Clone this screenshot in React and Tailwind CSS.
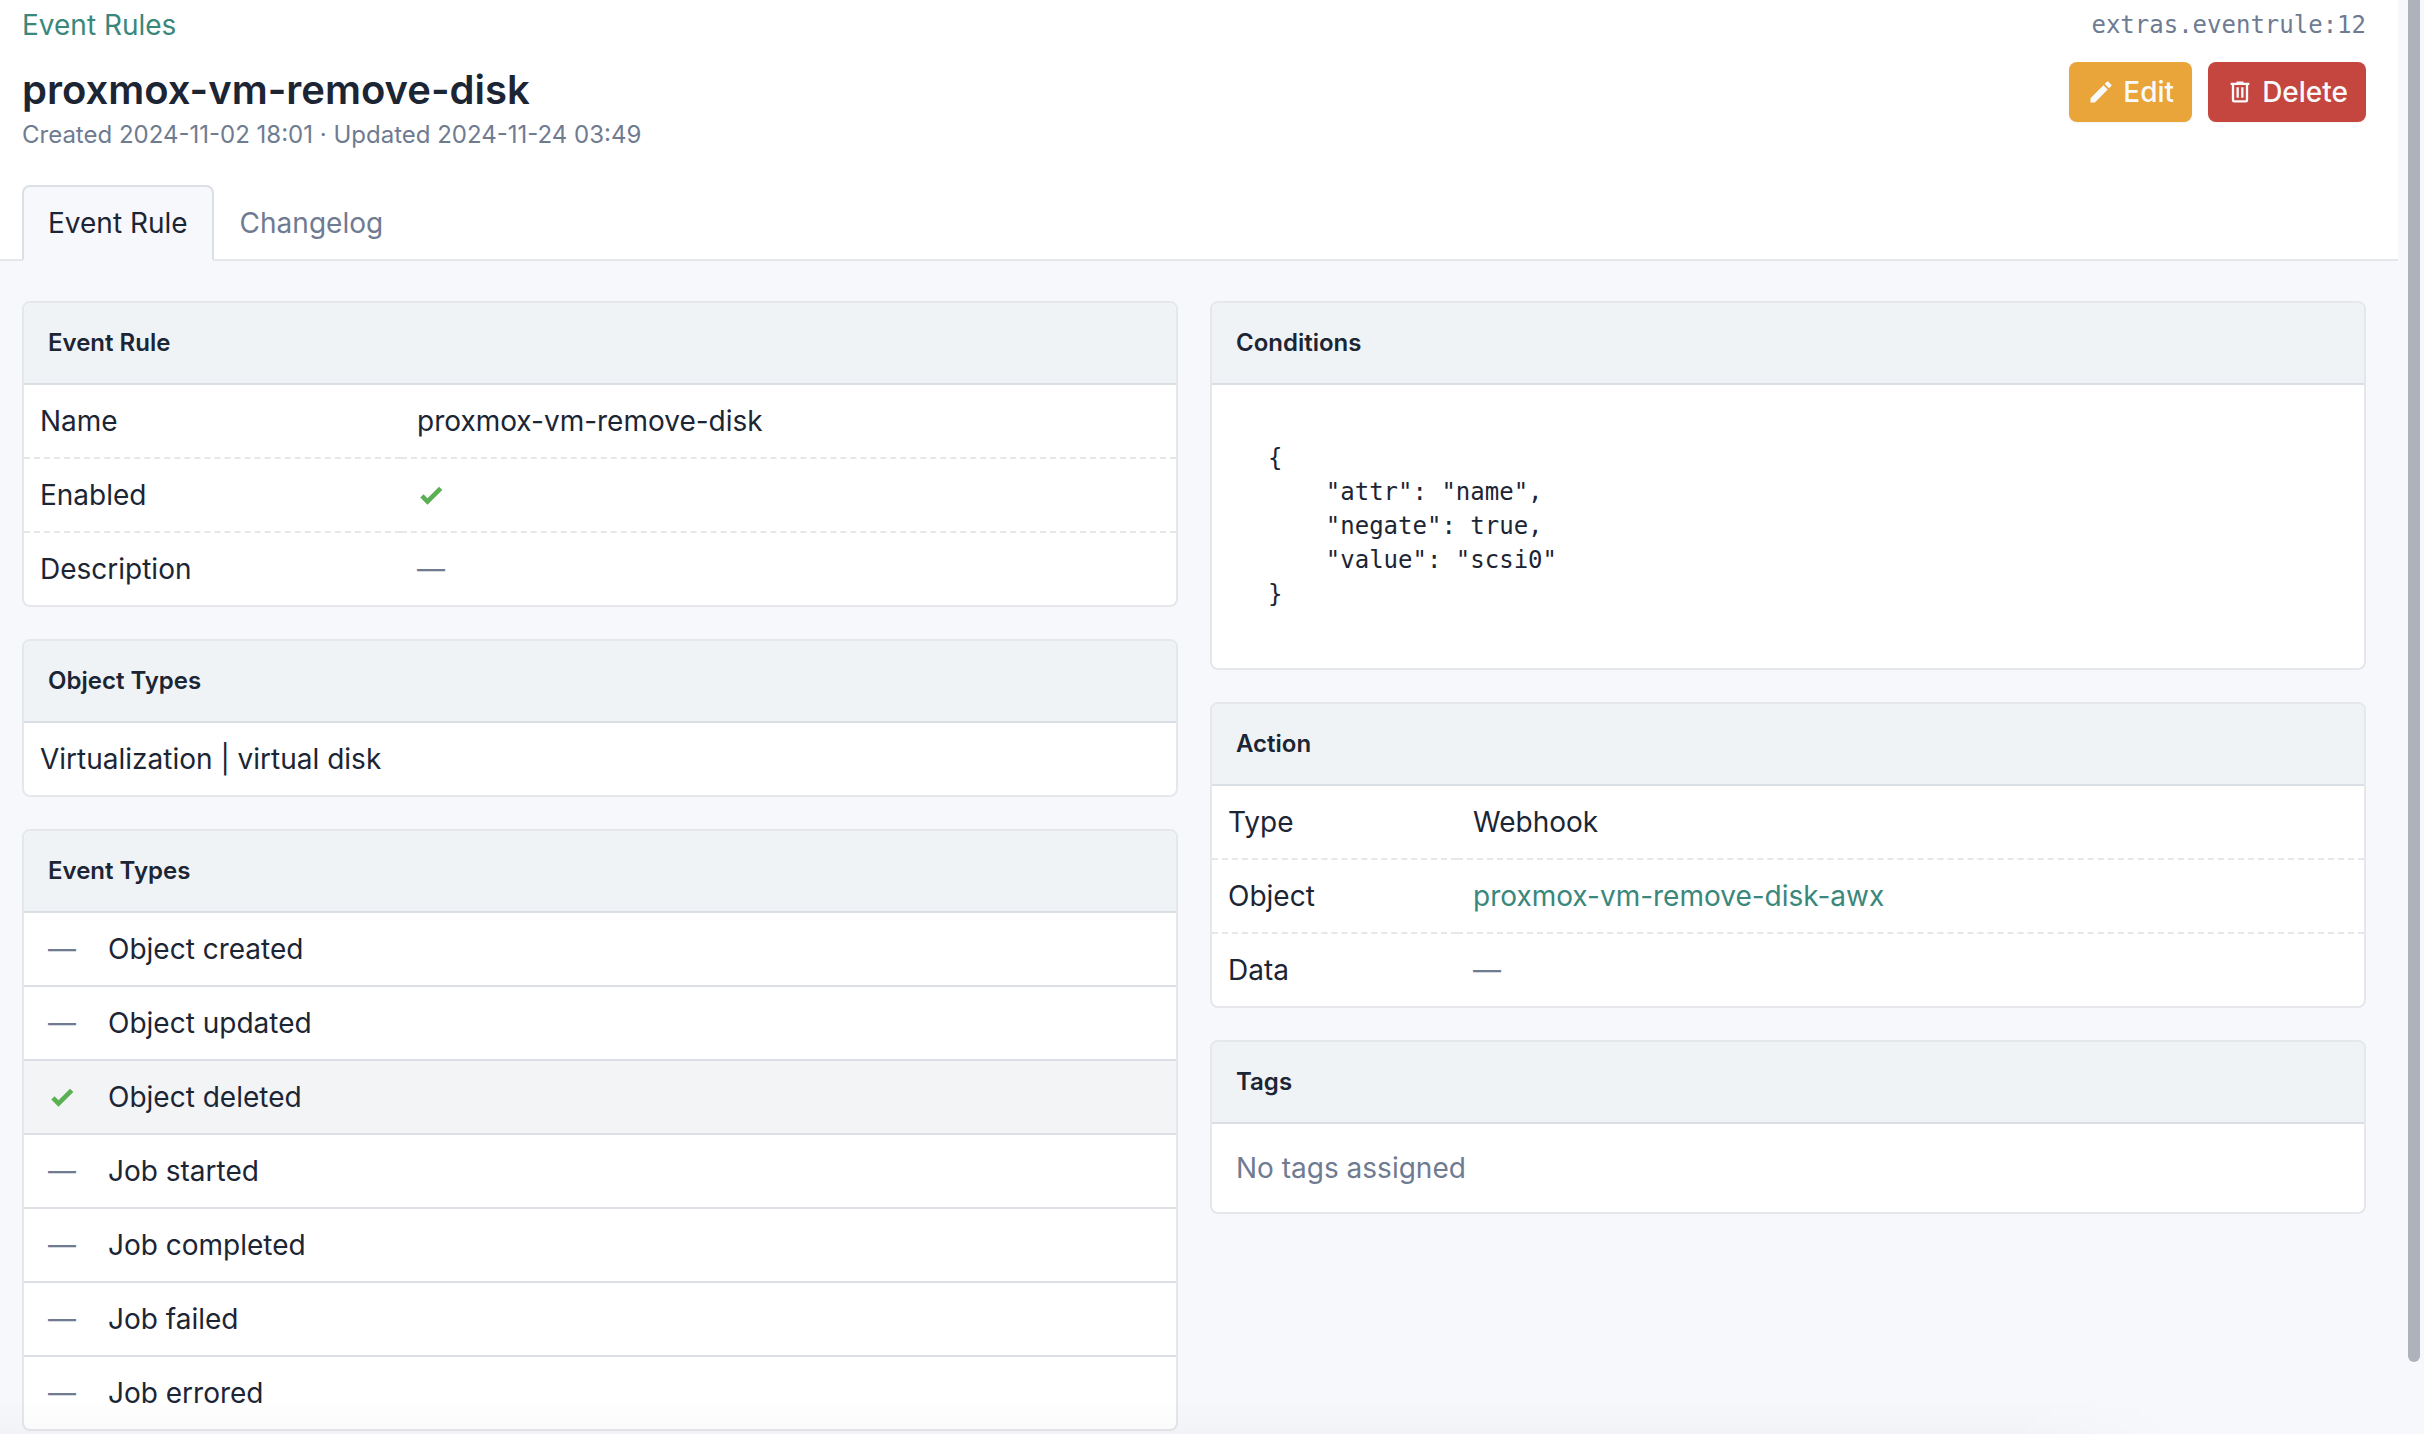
import React from "react";

const CHECK = "M9,20.42L2.79,14.21L5.62,11.38L9,14.77L18.88,4.88L21.71,7.71L9,20.42Z";
const PENCIL =
  "M20.71,7.04C21.1,6.65 21.1,6 20.71,5.63L18.37,3.29C18,2.9 17.35,2.9 16.96,3.29L15.12,5.12L18.87,8.87M3,17.25V21H6.75L17.81,9.93L14.06,6.18L3,17.25Z";
const TRASH =
  "M9,3V4H4V6H5V19A2,2 0 0,0 7,21H17A2,2 0 0,0 19,19V6H20V4H15V3H9M7,6H17V19H7V6M9,8V17H11V8H9M13,8V17H15V8H13Z";

const CONDITIONS = `{
    "attr": "name",
    "negate": true,
    "value": "scsi0"
}`;

const EVENT_TYPES = [
  { label: "Object created", on: false },
  { label: "Object updated", on: false },
  { label: "Object deleted", on: true },
  { label: "Job started", on: false },
  { label: "Job completed", on: false },
  { label: "Job failed", on: false },
  { label: "Job errored", on: false },
];

function Icon({ path, className = "" }) {
  return (
    <svg viewBox="0 0 24 24" fill="currentColor" aria-hidden="true" className={`size-7 shrink-0 ${className}`}>
      <path d={path} />
    </svg>
  );
}

function Check() {
  return (
    <span role="img" aria-label="Yes" className="flex h-10 items-center">
      <Icon path={CHECK} className="text-[#5bb054]" />
    </span>
  );
}

function Dash() {
  return <span className="text-[#6f7b91]">—</span>;
}

function Card({ title, children }) {
  return (
    <section className="overflow-hidden rounded-lg border-2 border-[#e5e7eb] bg-white">
      <h2 className="border-b-2 border-[#d9dfe5] bg-[#eff3f6] px-6 py-5 text-2xl leading-10 font-semibold">{title}</h2>
      {children}
    </section>
  );
}

function AttributeTable({ rows, labelWidth }) {
  return (
    <table className="w-full table-fixed border-separate border-spacing-0 text-left">
      <tbody className="[&>tr:not(:last-child)>*]:border-b-2 [&>tr>*]:border-dashed [&>tr>*]:border-[#e5e7eb]">
        {rows.map(([label, value]) => (
          <tr key={label}>
            <th scope="row" className={`px-4 py-4 font-normal ${labelWidth}`}>
              {label}
            </th>
            <td className="px-4 py-4">{value}</td>
          </tr>
        ))}
      </tbody>
    </table>
  );
}

export default function App() {
  return (
    <div className="relative flex min-h-screen bg-[#f7f8fc] font-['Inter',sans-serif] text-[28px] leading-10 text-[#1c2534]">
      <div className="min-w-0 flex-1">
        <header className="border-b-2 border-[#e5e7eb] bg-white pt-[5px] pr-8 pl-[22px]">
          <div className="flex items-center justify-between">
            <a href="#rules" className="text-[#3a877b]">
              Event Rules
            </a>
            <code className="font-['DejaVu_Sans_Mono',monospace] text-2xl leading-10 text-[#6f7b91]">
              extras.eventrule:12
            </code>
          </div>
          <div className="mt-[17px] flex items-start justify-between">
            <div>
              <h1 className="text-[40px] leading-14 font-semibold">proxmox-vm-remove-disk</h1>
              <p className="text-2xl leading-[34px] text-[#6f7b91]">
                Created 2024-11-02 18:01 · Updated 2024-11-24 03:49
              </p>
            </div>
            <div className="flex gap-4 font-medium text-[#f8fafc]">
              <button type="button" className="flex h-15 items-center gap-2 rounded-lg bg-[#e9a43a] px-[18px] shadow-xs">
                <Icon path={PENCIL} />
                Edit
              </button>
              <button type="button" className="flex h-15 items-center gap-2 rounded-lg bg-[#c5453f] px-[18px] shadow-xs">
                <Icon path={TRASH} />
                Delete
              </button>
            </div>
          </div>
          <nav className="mt-[33px] -mb-0.5 flex">
            <a
              href="#rule"
              aria-current="page"
              className="rounded-t-lg border-2 border-[#dce0e6] border-b-[#f7f8fc] bg-[#f7f8fc] px-6 py-4"
            >
              Event Rule
            </a>
            <a href="#changelog" className="border-2 border-transparent px-6 py-4 text-[#6f7b91]">
              Changelog
            </a>
          </nav>
        </header>

        <main className="grid grid-cols-2 items-start gap-8 pt-10 pr-8 pl-[22px]">
          <div className="flex flex-col gap-8">
            <Card title="Event Rule">
              <AttributeTable
                labelWidth="w-[377px]"
                rows={[
                  ["Name", "proxmox-vm-remove-disk"],
                  ["Enabled", <Check />],
                  ["Description", <Dash />],
                ]}
              />
            </Card>
            <Card title="Object Types">
              <p className="px-4 py-4">Virtualization | virtual disk</p>
            </Card>
            <Card title="Event Types">
              <ul className="divide-y-2 divide-[#dce0e6]">
                {EVENT_TYPES.map(({ label, on }) => (
                  <li key={label} className={`flex items-center gap-8 px-6 py-4 ${on ? "bg-[#f3f4f6]" : ""}`}>
                    <span className="w-7">{on ? <Check /> : <Dash />}</span>
                    {label}
                  </li>
                ))}
              </ul>
            </Card>
          </div>

          <div className="flex flex-col gap-8">
            <Card title="Conditions">
              <pre className="px-14 pt-14 pb-[57px] font-['DejaVu_Sans_Mono',monospace] text-2xl leading-[34px]">
                {CONDITIONS}
              </pre>
            </Card>
            <Card title="Action">
              <AttributeTable
                labelWidth="w-[245px]"
                rows={[
                  ["Type", "Webhook"],
                  [
                    "Object",
                    <a href="#webhook" className="text-[#3a877b]">
                      proxmox-vm-remove-disk-awx
                    </a>,
                  ],
                  ["Data", <Dash />],
                ]}
              />
            </Card>
            <Card title="Tags">
              <p className="px-6 py-6 text-[#6f7b91]">No tags assigned</p>
            </Card>
          </div>
        </main>
      </div>

      <div aria-hidden="true" className="w-[26px] shrink-0 pl-2.5">
        <div className="h-[95vh] w-3 rounded-b-full bg-[#aeb2bb]" />
      </div>
      <div
        aria-hidden="true"
        className="pointer-events-none absolute bottom-0 left-0 h-9 w-[90%] mask-r-from-92% bg-linear-to-b from-transparent to-black/2"
      />
    </div>
  );
}
